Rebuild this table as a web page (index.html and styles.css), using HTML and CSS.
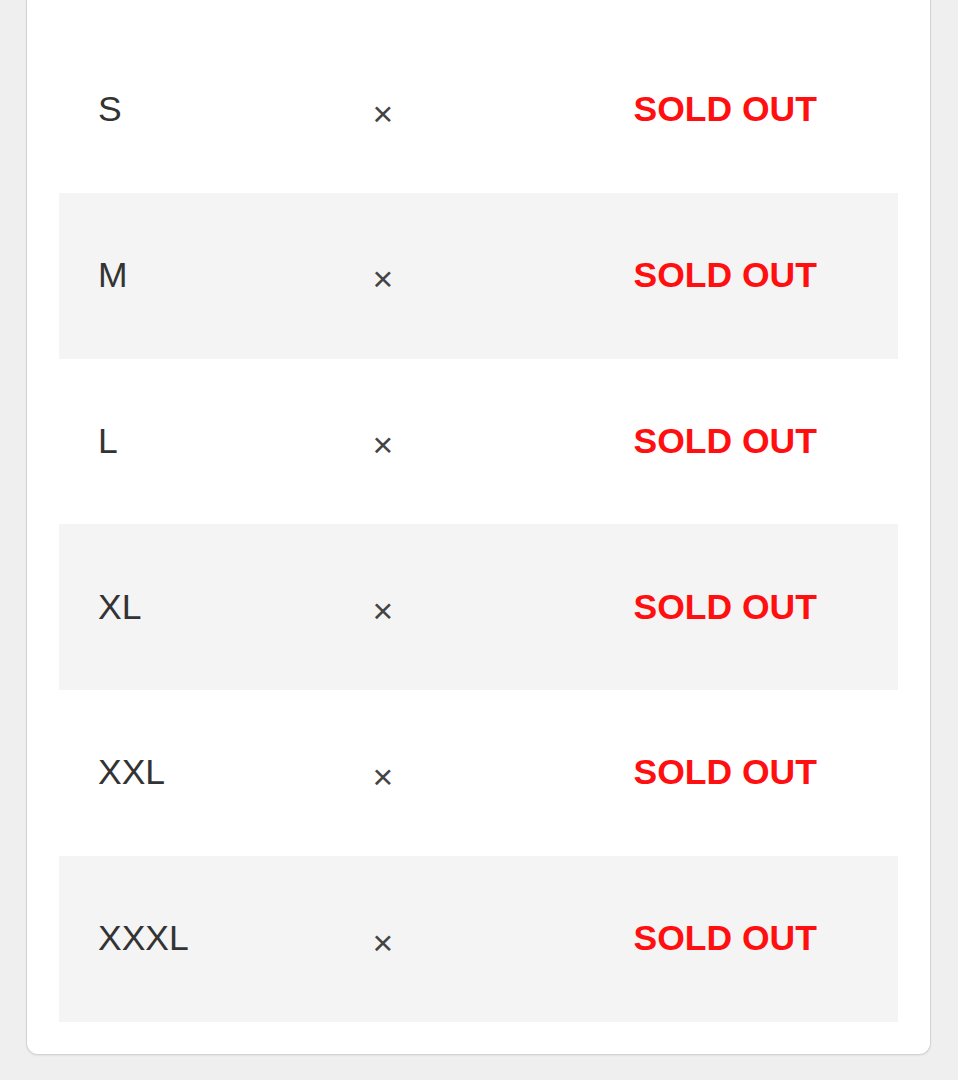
FILE: index.html
```html
<!DOCTYPE html>
<html lang="en">
<head>
<meta charset="utf-8">
<title>Size availability</title>
<link rel="stylesheet" href="styles.css">
</head>
<body>
<div class="page">
  <div class="card">
    <div class="row"><span class="size">S</span><span class="mark">×</span><span class="status">SOLD OUT</span></div>
    <div class="row alt"><span class="size">M</span><span class="mark">×</span><span class="status">SOLD OUT</span></div>
    <div class="row"><span class="size">L</span><span class="mark">×</span><span class="status">SOLD OUT</span></div>
    <div class="row alt"><span class="size">XL</span><span class="mark">×</span><span class="status">SOLD OUT</span></div>
    <div class="row"><span class="size">XXL</span><span class="mark">×</span><span class="status">SOLD OUT</span></div>
    <div class="row alt"><span class="size">XXXL</span><span class="mark">×</span><span class="status">SOLD OUT</span></div>
  </div>
</div>
</body>
</html>
```

FILE: styles.css
```css
html, body {
  margin: 0;
  padding: 0;
  background: #efefef;
}

body {
  font-family: "Liberation Sans", Arial, sans-serif;
  color: #333333;
}

.page {
  padding: 0 27px 25px 26px;
}

.card {
  background: #ffffff;
  border: 1px solid #d3d3d3;
  border-top: none;
  border-radius: 0 0 12px 12px;
  box-shadow: 0 1px 2px rgba(0, 0, 0, 0.06);
  padding: 27px 32px 32px 32px;
}

.row {
  display: grid;
  grid-template-columns: 273.5px 261px 1fr;
  align-items: center;
  height: 165.8px;
  padding-left: 39px;
  font-size: 35.5px;
  line-height: 1;
}

.row.alt {
  background: #f4f4f4;
}

.size {
  color: #333333;
}

.mark {
  color: #444444;
  padding: 9px 0 0 1px;
}

.status {
  color: #ff0f0f;
  font-weight: 700;
  padding-left: 1px;
}
```
